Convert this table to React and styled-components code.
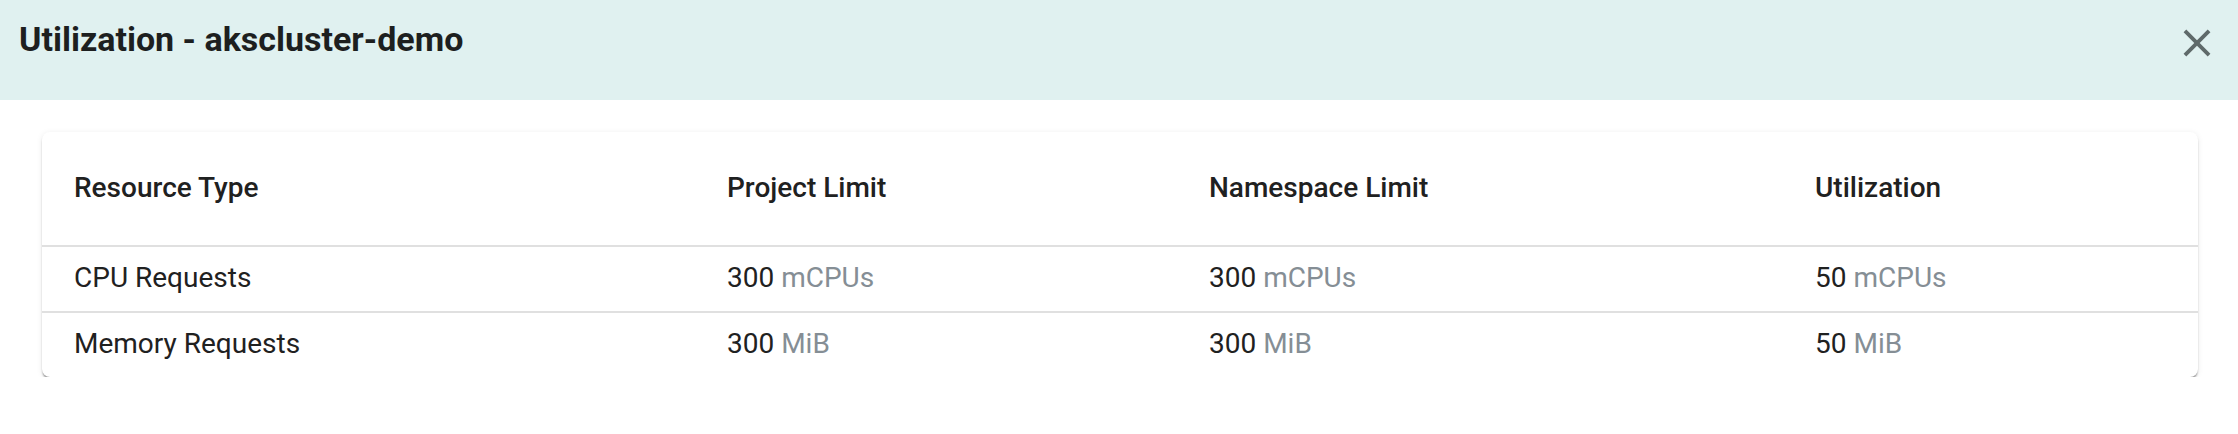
import React from "react";
import styled, { createGlobalStyle } from "styled-components";

const GlobalStyle = createGlobalStyle`
  html, body {
    margin: 0;
    padding: 0;
    background: #ffffff;
    font-family: Roboto, "Noto Sans", "Liberation Sans", sans-serif;
    -webkit-font-smoothing: antialiased;
  }
`;

const Dialog = styled.div`
  width: 2238px;
  display: flex;
  flex-direction: column;
`;

const TitleBar = styled.header`
  height: 100px;
  box-sizing: border-box;
  background: #e0f1f0;
  display: flex;
  align-items: flex-start;
  justify-content: space-between;
  padding: 19px 18px 0 19px;
`;

const Title = styled.h2`
  margin: 0;
  font-size: 34px;
  font-weight: 700;
  color: #1d1f1f;
  line-height: normal;
  letter-spacing: 0;
`;

const CloseButton = styled.button`
  border: 0;
  background: transparent;
  padding: 0;
  margin-top: 1px;
  width: 46px;
  height: 46px;
  color: #5f6a6a;
  display: flex;
  align-items: center;
  justify-content: center;
  cursor: pointer;
`;

const Content = styled.div`
  padding: 32px 40px 0 42px;
`;

const Card = styled.div`
  background: #fff;
  border-radius: 8px;
  box-shadow: 0 3px 2px -1px rgba(0, 0, 0, 0.32), 0 2px 2px 0 rgba(0, 0, 0, 0.12),
    0 1px 6px 0 rgba(0, 0, 0, 0.08);
  overflow: hidden;
`;

const Row = styled.div`
  display: grid;
  grid-template-columns: 653px 482px 606px 1fr;
  box-sizing: border-box;
  height: ${(p) => (p.$head ? "113px" : "66px")};
  align-items: center;
  padding-bottom: 3px;
  border-top: ${(p) => (p.$head ? "none" : "2px solid #e0e0e0")};
`;

const Cell = styled.div`
  padding-left: 32px;
  font-size: 28px;
  line-height: normal;
  font-weight: ${(p) => (p.$head ? 500 : 400)};
  color: #1f2121;
  white-space: nowrap;
`;

const Unit = styled.span`
  color: #858e95;
`;

const CloseIcon = () => (
  <svg width="46" height="46" viewBox="0 0 24 24" fill="currentColor" aria-hidden="true">
    <path d="M19 6.41 17.59 5 12 10.59 6.41 5 5 6.41 10.59 12 5 17.59 6.41 19 12 13.41 17.59 19 19 17.59 13.41 12z" />
  </svg>
);

const columns = ["Resource Type", "Project Limit", "Namespace Limit", "Utilization"];

const rows = [
  { name: "CPU Requests", unit: "mCPUs", values: [300, 300, 50] },
  { name: "Memory Requests", unit: "MiB", values: [300, 300, 50] },
];

export default function App() {
  return (
    <>
      <GlobalStyle />
      <Dialog>
        <TitleBar>
          <Title>Utilization - akscluster-demo</Title>
          <CloseButton aria-label="close">
            <CloseIcon />
          </CloseButton>
        </TitleBar>
        <Content>
          <Card>
            <Row $head>
              {columns.map((c) => (
                <Cell key={c} $head>
                  {c}
                </Cell>
              ))}
            </Row>
            {rows.map((r) => (
              <Row key={r.name}>
                <Cell>{r.name}</Cell>
                {r.values.map((v, i) => (
                  <Cell key={i}>
                    {v} <Unit>{r.unit}</Unit>
                  </Cell>
                ))}
              </Row>
            ))}
          </Card>
        </Content>
      </Dialog>
    </>
  );
}
